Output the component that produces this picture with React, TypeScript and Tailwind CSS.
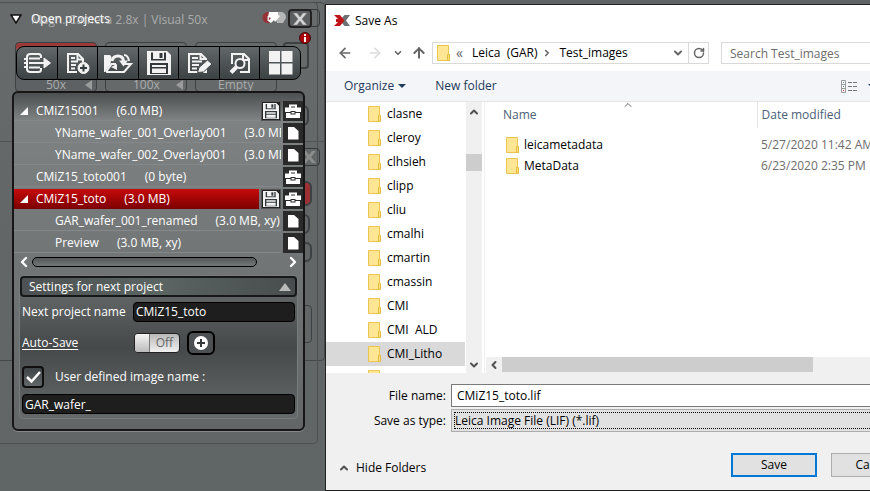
import { ReactNode, useState } from 'react';
import { ArrowLeft, ArrowRight, ArrowUp, ChevronDown, ChevronLeft, ChevronRight, ChevronUp, RotateCw } from 'lucide-react';

const projects = [
  { id: 1, name: 'CMiZ15001', info: '(6.0 MB)', level: 0, open: true, unsaved: true },
  { id: 2, name: 'YName_wafer_001_Overlay001', info: '(3.0 MB, xy)', level: 1 },
  { id: 3, name: 'YName_wafer_002_Overlay001', info: '(3.0 MB, xy)', level: 1 },
  { id: 4, name: 'CMiZ15_toto001', info: '(0 byte)', level: 0 },
  { id: 5, name: 'CMiZ15_toto', info: '(3.0 MB)', level: 0, open: true, unsaved: true },
  { id: 6, name: 'GAR_wafer_001_renamed', info: '(3.0 MB, xy)', level: 1 },
  { id: 7, name: 'Preview', info: '(3.0 MB, xy)', level: 1 }
];

const folders = ['clasne', 'cleroy', 'clhsieh', 'clipp', 'cliu', 'cmalhi', 'cmartin', 'cmassin', 'CMI', 'CMI  ALD', 'CMI_Litho', ''];

const files = [
  { name: 'leicametadata', modified: '5/27/2020 11:42 AM' },
  { name: 'MetaData', modified: '6/23/2020 2:35 PM' }
];

/* Icons */

function Floppy({ className }: { className: string }) {
  return (
    <svg viewBox="0 0 24 24" className={className} aria-hidden="true">
      <path d="M0 0h20l4 4v20H0z" fill="#f2f2f2" />
      <path d="M4 1.500h15v8H4zM3 12h18v11H3z" fill="#33383a" />
      <path d="M6 1h11v7H6z" fill="#f2f2f2" />
      <path d="M12.500 2h3v5h-3z" fill="#33383a" />
      <path d="M5 14h14v2H5zM5 17.500h14v4.500H5z" fill="#f2f2f2" />
    </svg>
  );
}

function Briefcase() {
  return (
    <svg viewBox="0 0 16 14" className="h-3.5 w-4" aria-hidden="true">
      <path d="M5 4V1.500h6V4" fill="none" stroke="#fff" strokeWidth="2" />
      <path d="M0 3.500h16V8H0zM1 9h14v5H1z" fill="#fff" />
      <path d="M5.500 7h5v3.500h-5z" fill="#2a2a2a" />
      <path d="M6.500 8h3v1.500h-3z" fill="#fff" />
    </svg>
  );
}

function Sheet() {
  return (
    <svg viewBox="0 0 12 14" className="h-3.5 w-3" aria-hidden="true">
      <path d="M1 1h6l4.500 4v8.500H1z" fill="#fff" />
    </svg>
  );
}

function Folder() {
  return (
    <svg viewBox="0 0 13 16" className="h-4 w-[13px] shrink-0" aria-hidden="true">
      <path d="M.5.5h11v15H.5z" fill="#ffe694" stroke="#eac54f" />
      <path d="M10.500 9.500h2v6h-2z" fill="#ffe07a" stroke="#e5bb3e" />
    </svg>
  );
}

function AppLogo() {
  return (
    <svg viewBox="0 0 16 11" className="h-[11px] w-4 shrink-0" aria-hidden="true">
      <path d="M16 0h-5.500L7.500 3.500v4l3 3.500H16l-4-5.500z" fill="#6d7173" />
      <path d="M0 0h6l4.500 5.500L6 11H0l4-4H2V4h2z" fill="#c01518" />
    </svg>
  );
}

const tools: { label: string; icon: ReactNode }[] = [
  {
    label: 'Export',
    icon: (
      <g fill="none" stroke="#f2f2f2" strokeWidth="2">
        <path d="M18 6V4.500Q18 2 15.500 2h-8Q4 2 4 5v12q0 3 3.500 3h8q2.500 0 2.500-2.500V16" />
        <path d="M6 6.500h11M6 11h16M6 15.500h11" />
        <path d="M21 6l6.500 5-6.500 5z" fill="#f2f2f2" strokeWidth="1" />
        <path d="M1 7h3M1 11h3M1 15h3" />
      </g>
    )
  },
  {
    label: 'New project',
    icon: (
      <g fill="none" stroke="#f2f2f2" strokeWidth="2">
        <path d="M14 20H5V2h10l5 5v3" />
        <path d="M14.500 2v5.500H20M8 6h4M8 9.500h7M8 13h5M8 16.500h4" />
        <circle cx="20.500" cy="16" r="5.500" fill="#f2f2f2" strokeWidth="1" />
        <path d="M17 16h7M20.500 12.500v7" stroke="#33383a" />
      </g>
    )
  },
  {
    label: 'Open project',
    icon: (
      <g fill="none" stroke="#f2f2f2" strokeWidth="2">
        <path d="M0 3h6l1.500 2-1 7L1 20H0z" fill="#f2f2f2" strokeWidth="0" />
        <path d="M2 20l5.500-8H12M19 12h8l-7 8H2" />
        <path d="M8 9q1-5 6-5t5.500 5" strokeWidth="3" />
        <path d="M15 8.500h9l-4.500 6z" fill="#f2f2f2" strokeWidth="0" />
        <path d="M7 15l6-3v6z" fill="#f2f2f2" strokeWidth="0" />
        <path d="M20 3q4 0 5 6" />
      </g>
    )
  },
  { label: 'Save project', icon: null },
  {
    label: 'Rename',
    icon: (
      <g fill="none" stroke="#f2f2f2" strokeWidth="2">
        <path d="M14 20H4V2h12l5 5v1M21 16v4h-3" />
        <path d="M15.500 2v5H21M7 6h6M7 9.500h10M7 13h7M7 16.500h5" />
        <path d="M12.500 20.500l1.500-5L22.500 8l4.500 4-8.500 8z" fill="#f2f2f2" stroke="#42484a" strokeWidth="1" />
      </g>
    )
  },
  {
    label: 'Find',
    icon: (
      <g fill="none" stroke="#f2f2f2" strokeWidth="2">
        <path d="M6 12V2h12l5 5v13h-9" />
        <path d="M17 2v6h6" />
        <circle cx="14" cy="11.500" r="4.500" fill="#42484a" />
        <path d="M10.500 15L5 20.500" strokeWidth="4" />
      </g>
    )
  },
  {
    label: 'Gallery',
    icon: <path d="M3-1h11v11H3zM15.500-1h11v11h-11zM3 11.500h11v11H3zM15.500 11.500h11v11h-11z" fill="#f2f2f2" />
  }
];

/* Panels of the acquisition window that show through behind the overlay */
function Backdrop() {
  return (
    <div aria-hidden="true" className="absolute inset-0 overflow-hidden text-[12px] text-[#aaacac]">
      <div className="absolute -left-2 top-0.5 h-[359px] w-[333px] rounded border border-[#44484a]" />
      <div className="absolute -left-2 top-0.5 h-[442px] w-[326px] rounded border border-[#4c5052]" />
      <div className="absolute left-0 top-[141px] h-px w-full bg-[#505456]" />
      <div className="absolute left-[31px] top-[10px] leading-5 whitespace-nowrap">Magn. Camera 2.8x | Visual 50x</div>
      <div className="absolute left-[15px] top-[42px] h-[50px] w-[82px] rounded border border-[#3d4143] bg-linear-to-b from-[#9a3a3a] from-10% to-[#5d6163] to-15%" />
      <div className="absolute left-[105px] top-[42px] h-[50px] w-[82px] rounded border border-[#3d4143]" />
      <div className="absolute left-[195px] top-[42px] h-[50px] w-[82px] rounded border border-[#3d4143]" />
      <div className="absolute left-[283px] top-[42px] h-[27px] w-[26px] rounded border-2 border-[#3d4143]" />
      <div className="absolute left-[46px] top-[76px] leading-[18px]">50x</div>
      <div className="absolute left-[133px] top-[76px] leading-[18px]">100x</div>
      <div className="absolute left-[218px] top-[76px] leading-[18px]">Empty</div>
      <div className="absolute left-[85px] top-[80px] border-y-5 border-r-7 border-y-transparent border-r-[#9a9c9c]" />
      <div className="absolute left-[176px] top-[80px] border-y-5 border-r-7 border-y-transparent border-r-[#9a9c9c]" />
      <div className="absolute left-[290px] top-[148px] h-[18px] w-[30px] rounded border border-[#35393b]">
        <svg viewBox="0 0 16 12" className="mt-0.5 ml-2.5 h-3 w-4">
          <path d="M1 0h4l3 4 3-4h4l-5 6 5 6h-4L8 8l-3 4H1l5-6z" fill="#8b8d8d" />
        </svg>
      </div>
      <div className="absolute left-[290px] top-[105px] h-[21px] w-[19px] rounded-md border-2 border-[#3d4143]" />
      <div className="absolute left-[290px] top-[181px] h-[25px] w-[22px] rounded-md border-2 border-[#3d4143] bg-[#9d3033]" />
      <div className="absolute left-[290px] top-[214px] h-5 w-[20px] rounded-md border-2 border-[#3d4143]" />
      <div className="absolute left-[290px] top-[242px] h-5 w-[22px] rounded-md border-2 border-[#3d4143]" />
      <div className="absolute left-[290px] top-[305px] h-[38px] w-[22px] rounded border border-[#3d4143]" />
      <div className="absolute left-[300px] top-[9px] h-[18px] w-5 rounded border border-[#35393b]" />
    </div>
  );
}

function ProjectRow({ project, selected, onSelect }: { project: (typeof projects)[number]; selected: boolean; onSelect: () => void }) {
  return (
    <li className="flex h-[22px] items-start gap-0.5 text-white">
      <button
        onClick={onSelect}
        className={
          'flex h-5 min-w-0 flex-1 items-center overflow-hidden whitespace-pre text-left ' +
          (selected ? 'bg-linear-to-b from-[#c80c0c] to-[#7c0000]' : 'border-b border-[#84888a]')
        }
      >
        <span className={'shrink-0 ' + (project.level ? 'w-[41px]' : 'w-[22px] pl-1.5')}>
          {project.open && (
            <svg viewBox="0 0 8 8" className="size-2" aria-hidden="true">
              <path d="M8 0v8H0z" fill="#fff" />
            </svg>
          )}
        </span>
        <span>{project.name}</span>
        <span className="pl-[18px]">{project.info}</span>
      </button>
      {project.unsaved && (
        <button aria-label="Save" className="flex size-5 shrink-0 items-center justify-center border border-[#555] bg-[#232323]">
          <Floppy className="size-4" />
        </button>
      )}
      <button
        aria-label={project.level ? 'Image' : 'Project'}
        className="flex size-5 shrink-0 items-center justify-center bg-[#2a2a2a]"
      >
        {project.level ? <Sheet /> : <Briefcase />}
      </button>
    </li>
  );
}

function OpenProjects() {
  const [selected, setSelected] = useState(5);
  const [autoSave, setAutoSave] = useState(false);
  const [projectName, setProjectName] = useState('CMiZ15_toto');
  const [imageName, setImageName] = useState('GAR_wafer_');

  return (
    <aside className="relative w-[325px] shrink-0 bg-linear-to-b from-[#676b6c] via-[#626667] to-[#606566] text-[12px] text-white">
      <Backdrop />
      <div className="relative pr-5 pl-3">
        {/* Header */}
        <div className="flex h-[46px] items-start pt-[9px]">
          <svg viewBox="0 0 12 10" className="mt-[5px] ml-[-2px] h-2.5 w-3" aria-hidden="true">
            <path d="M1 1h10L6 9z" fill="#fff" stroke="#111" strokeWidth="1.500" />
          </svg>
          <h1 className="flex-1 pl-[9px] leading-5">Open projects</h1>
          <svg viewBox="0 0 26 14" className="mt-0.5 h-3.5 w-[26px]" aria-hidden="true">
            <circle cx="6" cy="6.500" r="5.500" fill="#963236" />
            <path d="M5.500 5h1.500v5H5.500z" fill="#ddd" />
            <path d="M12 1h8q4 1 4 6l-3 5h-6z" fill="#b5b7b7" />
            <path d="M7 1h9v3l2 1-5 6-1-2-3 3-3-2 3-3-3-1z" fill="#fff" />
          </svg>
          <button aria-label="Close" className="mr-[-7px] flex h-[19px] w-6 items-center justify-center rounded border-2 border-[#222] bg-[#5b5f61]">
            <svg viewBox="0 0 16 12" className="h-3 w-4" aria-hidden="true">
              <path d="M1 0h4l3 4 3-4h4l-5 6 5 6h-4L8 8l-3 4H1l5-6z" fill="#d5d5d5" stroke="#777" strokeWidth=".5" />
            </svg>
          </button>
        </div>
        <svg viewBox="0 0 12 12" className="absolute top-8 left-[299px] size-3" aria-hidden="true">
          <circle cx="6" cy="6" r="5.500" fill="#a8080c" stroke="#44080a" />
          <path d="M5 2h2v2H5zM5 5h2v5H5z" fill="#fff" />
        </svg>

        {/* Toolbar */}
        <div className="mx-1 flex h-[34px] divide-x divide-black overflow-hidden rounded-lg border border-black bg-linear-to-b from-[#62686a] to-[#3c4244]">
          {tools.map(tool => (
            <button key={tool.label} aria-label={tool.label} className="flex flex-1 items-center justify-center">
              {tool.icon ? (
                <svg viewBox="0 0 28 22" className="h-[22px] w-7 overflow-visible" aria-hidden="true">{tool.icon}</svg>
              ) : (
                <Floppy className="size-6" />
              )}
            </button>
          ))}
        </div>

        <div className="mt-[11px] rounded-md border-2 border-[#161616] bg-linear-to-b from-[#4c5051] via-[#7e8283] via-8% to-[#626667] pb-2.5 shadow-[0_1px_0_#85898a]">
          <ul className="pt-2">
            {projects.map(project => (
              <ProjectRow
                key={project.id}
                project={project}
                selected={project.id === selected}
                onSelect={() => setSelected(project.id)}
              />
            ))}
          </ul>
          <div className="flex h-[14px] items-center px-0.5">
            <ChevronLeft className="size-4" strokeWidth={3.5} />
            <div className="h-2.5 flex-1 rounded-full border border-black bg-linear-to-b from-[#54585a] to-[#737778]" />
            <ChevronRight className="ml-7 size-4" strokeWidth={3.5} />
          </div>

          {/* Settings */}
          <section className="mx-[5px] mt-1.5 rounded border border-[#777b7c] bg-linear-to-b from-[#6b6f70] via-[#45494a] to-[#65696a]">
            <button className="flex h-[21px] w-full items-center justify-between rounded border-2 border-[#161819] bg-linear-to-r from-[#4d5153] via-[#5b6562] to-[#484c4e] pr-1 pl-[7px]">
              <span>Settings for next project</span>
              <svg viewBox="0 0 12 8" className="h-2 w-3" aria-hidden="true">
                <path d="M6 0l6 8H0z" fill="#b9bbbb" />
              </svg>
            </button>
            <div className="px-0.5 pb-1">
              <div className="flex h-[29px] items-center gap-[5px]">
                <label htmlFor="project-name" className="w-[106px] shrink-0 whitespace-nowrap">Next project name</label>
                <input
                  id="project-name"
                  value={projectName}
                  onChange={(e) => setProjectName(e.target.value)}
                  className="h-5 w-full min-w-0 rounded border border-black bg-[#1e1e1e] px-0.5 outline-none"
                />
              </div>
              <div className="flex h-[34px] items-center">
                <a href="#auto-save" className="w-28 whitespace-nowrap underline underline-offset-2">Auto-Save</a>
                <button
                  role="switch"
                  aria-label="Auto-Save"
                  aria-checked={autoSave}
                  onClick={() => setAutoSave(!autoSave)}
                  className="flex h-5 w-[46px] items-stretch overflow-hidden rounded border border-[#222] bg-linear-to-b from-[#b9b9b9] to-[#f0f0f0] text-[#666]"
                >
                  <span className="w-[15px] border-r border-[#777] bg-linear-to-b from-[#f5f5f5] to-[#bbb]" />
                  <span className="flex-1 text-center leading-[18px]">{autoSave ? 'On' : 'Off'}</span>
                </button>
                <button aria-label="Add" className="ml-[7px] flex h-6 w-7 items-center justify-center rounded-md border-2 border-black bg-[#4c5052]">
                  <svg viewBox="0 0 14 14" className="size-3.5" aria-hidden="true">
                    <circle cx="7" cy="7" r="7" fill="#fff" />
                    <path d="M3 7h8M7 3v8" stroke="#33383a" strokeWidth="2" />
                  </svg>
                </button>
              </div>
              <div className="flex h-[34px] items-center">
                <label className="flex items-center gap-[11px]">
                  <span className="relative flex size-[22px]">
                    <input type="checkbox" defaultChecked className="peer size-[22px] appearance-none rounded border-2 border-[#101010] bg-linear-to-b from-[#3e4345] to-[#62676a]" />
                    <svg viewBox="0 0 22 22" className="pointer-events-none absolute inset-0 hidden peer-checked:block" aria-hidden="true">
                      <path d="M5 11l4.500 4.500L18 6" fill="none" stroke="#fff" strokeWidth="2.500" />
                    </svg>
                  </span>
                  User defined image name :
                </label>
              </div>
              <input
                aria-label="Image name"
                value={imageName}
                onChange={(e) => setImageName(e.target.value)}
                className="block h-5 w-full rounded border border-black bg-[#1e1e1e] px-0.5 outline-none"
              />
            </div>
          </section>
        </div>
      </div>
    </aside>
  );
}

function SaveAsDialog() {
  const [folder, setFolder] = useState('CMI_Litho');
  const [fileName, setFileName] = useState('CMiZ15_toto.lif');

  return (
    <div role="dialog" aria-labelledby="dialog-title" className="-mr-16 flex min-w-[560px] flex-1 flex-col border-t border-l border-[#222] bg-white text-[12px] text-black">
      <header className="flex h-[31px] shrink-0 items-center gap-[5px] pl-2">
        <AppLogo />
        <h2 id="dialog-title">Save As</h2>
      </header>

      {/* Navigation */}
      <div className="flex h-[35px] shrink-0 items-start pt-1.5 pr-[17px] text-[#666]">
        <div className="flex h-[22px] w-[106px] shrink-0 items-center pl-[11px]">
          <button aria-label="Back"><ArrowLeft className="size-4" strokeWidth={2.5} /></button>
          <button aria-label="Forward" className="ml-3.5 text-[#ddd]"><ArrowRight className="size-4" strokeWidth={2.5} /></button>
          <button aria-label="Recent locations" className="ml-2.5"><ChevronDown className="size-2.5" strokeWidth={4} /></button>
          <button aria-label="Up" className="ml-2"><ArrowUp className="size-4" strokeWidth={3} /></button>
        </div>
        <div className="flex h-[22px] w-[277px] shrink-0 items-center border border-[#d9d9d9] pl-1">
          <Folder />
          <span className="pl-1.5 text-[14px] leading-4">«</span>
          <span className="pl-[9px] whitespace-pre text-black">Leica  (GAR)</span>
          <ChevronRight className="ml-[5px] size-2.5" strokeWidth={4} />
          <span className="pl-[7px] text-black">Test_images</span>
          <button aria-label="Previous locations" className="ml-auto pr-1"><ChevronDown className="size-3" strokeWidth={4} /></button>
          <button aria-label="Refresh" className="flex h-full w-5 items-center justify-center border-l border-[#d9d9d9]">
            <RotateCw className="size-3" strokeWidth={3} />
          </button>
        </div>
        <input aria-label="Search" placeholder="Search Test_images" className="ml-3 h-[22px] min-w-0 flex-1 border border-[#d9d9d9] px-2 outline-none placeholder:text-[#6d6d6d]" />
      </div>

      {/* Commands */}
      <div className="flex h-[31px] shrink-0 items-center border-b border-[#e5e5e5] bg-[#f4f5f8] pr-[58px] pl-[18px] text-[#1e395b]">
        <button className="flex items-center gap-1">
          Organize
          <svg viewBox="0 0 8 4" className="h-1 w-2" aria-hidden="true"><path d="M0 0h8L4 4z" fill="#1e395b" /></svg>
        </button>
        <button className="ml-[29px]">New folder</button>
        <button aria-label="Change view" className="ml-auto flex items-center gap-2.5">
          <svg viewBox="0 0 17 13" className="h-[13px] w-[17px]" aria-hidden="true">
            <path d="M.5.5h4v12h-4zM.5 4.500h4M.5 8.500h4" fill="#fff" stroke="#999" />
            <path d="M7 2.500h4M12 2.500h4M7 6.500h4M12 6.500h4M7 10.500h4M12 10.500h4" stroke="#777" />
            <path d="M2 2h1v1H2zM2 6h1v1H2z" fill="#4a7ab5" />
            <path d="M2 10h1v1H2z" fill="#c33" />
          </svg>
          <svg viewBox="0 0 8 4" className="h-1 w-2" aria-hidden="true"><path d="M0 0h8L4 4z" fill="#1e395b" /></svg>
        </button>
      </div>

      <div className="flex min-h-0 flex-1">
        {/* Folder tree */}
        <ul className="w-[139px] shrink-0 overflow-hidden">
          {folders.map(name => (
            <li key={name}>
              <button
                onClick={() => setFolder(name)}
                className={'flex h-6 w-full items-center gap-1.5 pl-[42px] whitespace-pre ' + (folder === name ? 'bg-[#d9d9d9]' : '')}
              >
                <Folder />
                {name}
              </button>
            </li>
          ))}
        </ul>
        <div className="ml-px flex w-4 shrink-0 flex-col items-center justify-between bg-[#f0f0f0] text-[#505050]">
          <ChevronUp className="mt-1 size-3" strokeWidth={4} />
          <div className="mt-9 mb-auto h-[17px] w-full bg-[#cdcdcd]" />
          <ChevronDown className="mb-0.5 size-3" strokeWidth={4} />
        </div>

        {/* Files */}
        <div className="ml-0.5 flex min-w-0 flex-1 flex-col border-l border-[#f0f0f0]">
          <table className="w-full table-fixed text-left">
            <thead>
              <tr className="h-[26px] text-[#4c607a]">
                <th className="relative w-[272px] border-r border-[#e5e5e5] pl-[18px] font-normal">
                  Name
                  <ChevronUp className="absolute top-[-3px] left-[137px] size-3 text-[#666]" />
                </th>
                <th className="pl-1 font-normal">Date modified</th>
              </tr>
            </thead>
            <tbody>
              <tr className="h-1.5"><td colSpan={2} /></tr>
              {files.map(file => (
                <tr key={file.name} className="h-[21px]">
                  <td className="pl-[21px]">
                    <span className="flex items-center gap-[5px]"><Folder />{file.name}</span>
                  </td>
                  <td className="pl-1 whitespace-nowrap text-[#6d6d6d]">{file.modified}</td>
                </tr>
              ))}
            </tbody>
          </table>
          <div className="mt-auto ml-px flex h-4 items-center bg-[#f0f0f0]">
            <ChevronLeft className="mx-0.5 size-3 text-[#505050]" strokeWidth={4} />
            <div className="h-[15px] w-[311px] self-start bg-[#cdcdcd]" />
          </div>
        </div>
      </div>

      {/* File name and type */}
      <footer className="shrink-0 bg-[#f0f0f0] pt-[11px] pr-[17px] pb-[13px]">
        <div className="flex items-center gap-[5px]">
          <label htmlFor="file-name" className="w-[120px] shrink-0 text-right">File name:</label>
          <input
            id="file-name"
            value={fileName}
            onChange={(e) => setFileName(e.target.value)}
            className="h-[23px] min-w-0 flex-1 border border-[#7a7a7a] bg-white px-[5px] outline-none"
          />
        </div>
        <div className="mt-0.5 flex items-center gap-[5px]">
          <label htmlFor="file-type" className="w-[120px] shrink-0 text-right">Save as type:</label>
          <div className="flex h-[23px] min-w-0 flex-1 border border-[#acacac] bg-[#e1e1e1] p-0.5">
            <select id="file-type" className="h-[17px] w-full appearance-none border border-dotted border-black leading-[15px] outline-none">
              <option>Leica Image File (LIF) (*.lif)</option>
            </select>
          </div>
        </div>
        <div className="mt-[21px] flex items-end gap-3.5">
          <button className="mr-auto flex items-center gap-1.5 pl-3">
            <ChevronUp className="size-3" strokeWidth={4} stroke="#505050" />
            Hide Folders
          </button>
          <button className="h-6 w-[86px] border-2 border-[#0078d7] bg-[#e1e1e1]">Save</button>
          <button className="h-6 w-[86px] border border-[#adadad] bg-[#e1e1e1]">Cancel</button>
        </div>
      </footer>
    </div>
  );
}

export default function App() {
  return (
    <div className="flex h-screen overflow-hidden bg-[#5f6365] font-['Open_Sans','Noto_Sans',sans-serif]">
      <OpenProjects />
      <main className="flex min-w-0 flex-1 border-b border-[#222] pt-1">
        <SaveAsDialog />
      </main>
    </div>
  );
}
